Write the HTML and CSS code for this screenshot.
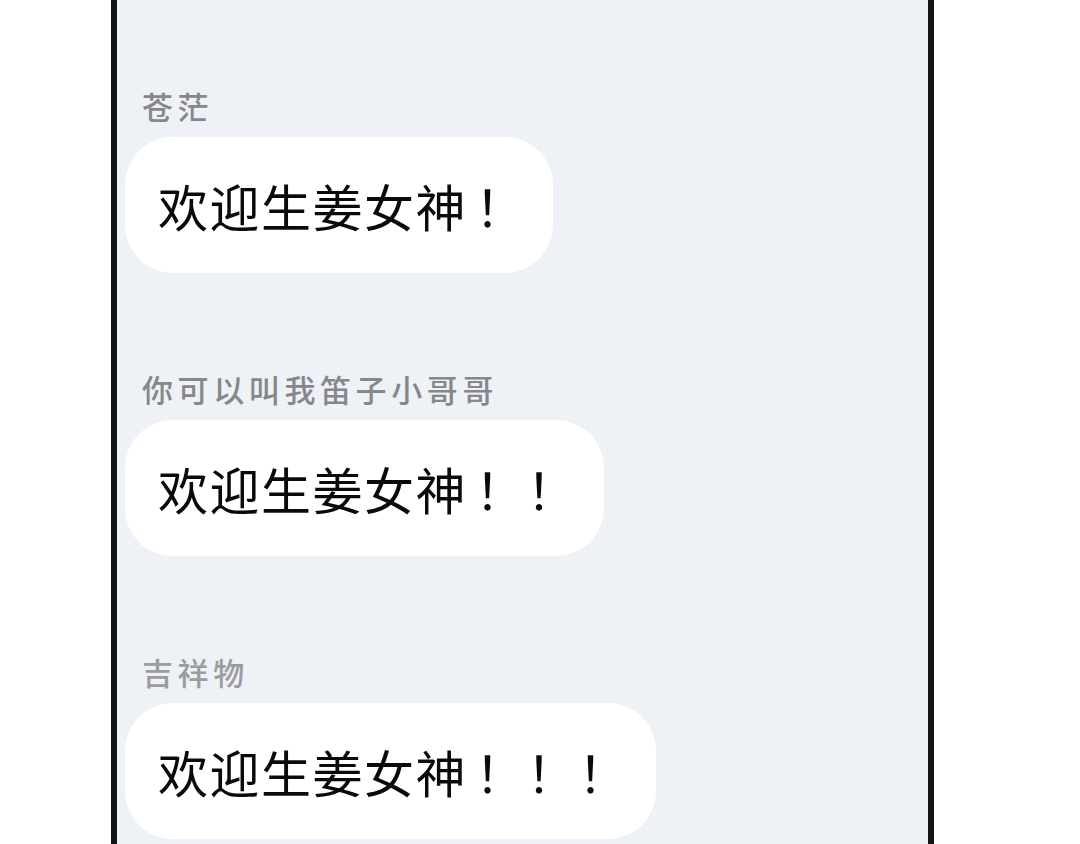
FILE: index.html
```html
<!DOCTYPE html>
<html lang="zh-CN">
<head>
  <meta charset="UTF-8">
  <title>群聊</title>
  <link rel="stylesheet" href="styles.css">
</head>
<body>

  <div class="phone">
    <div class="chat">

      <div class="message">
        <div class="name">苍茫</div>
        <div class="bubble">欢迎生姜女神<span class="punct">！</span></div>
      </div>

      <div class="message">
        <div class="name">你可以叫我笛子小哥哥</div>
        <div class="bubble">欢迎生姜女神<span class="punct">！！</span></div>
      </div>

      <div class="message">
        <div class="name light">吉祥物</div>
        <div class="bubble">欢迎生姜女神<span class="punct">！！！</span></div>
      </div>

    </div>
  </div>

</body>
</html>
```

FILE: styles.css
```css
body {
  margin: 0;
  background: #ffffff;
  font-family: "Noto Sans CJK SC", "Noto Sans", sans-serif;
}
.phone {
  margin-left: 111px;
  width: 823px;
  height: 844px;
  box-sizing: border-box;
  border-left: 6px solid #111316;
  border-right: 6px solid #111316;
  background: #eef1f6;
  overflow: hidden;
}
.chat {
  display: flex;
  flex-direction: column;
  align-items: flex-start;
  gap: 98px;
  padding: 88px 0 0 8px;
}
.message {
  display: flex;
  flex-direction: column;
  align-items: flex-start;
  gap: 13px;
}
.name {
  margin-left: 17px;
  font-size: 31px;
  line-height: 36px;
  letter-spacing: 4.6px;
  font-weight: 500;
  color: #85878b;
}
.name.light {
  color: #9a9ca0;
}
.bubble {
  background: #ffffff;
  border-radius: 48px;
  padding: 33px 26px 33px 33px;
  font-size: 50px;
  line-height: 70px;
  letter-spacing: 1.5px;
  color: #0a0a0a;
}
.punct {
  margin-left: 8px;
}
```
